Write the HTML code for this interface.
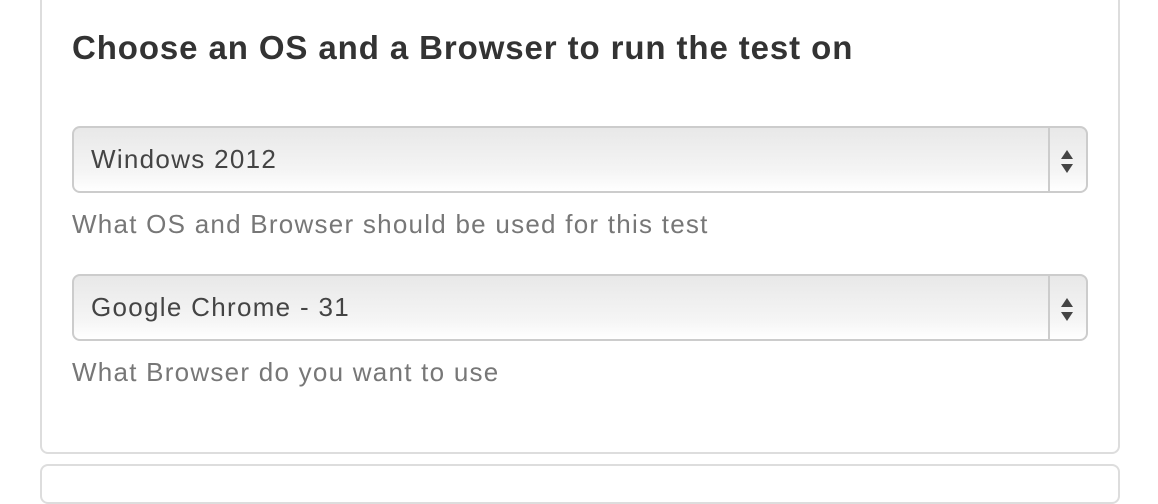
<!DOCTYPE html>
<html><head><style>
body{margin:0;width:1158px;height:468px;overflow:hidden;background:#fff;font-family:"Liberation Sans",Arial,sans-serif;position:relative}
.panel{position:absolute;left:40px;top:-10px;width:1080px;height:464px;border:2px solid #ddd;border-radius:8px;box-sizing:border-box}
.panel2{position:absolute;left:40px;top:464px;width:1080px;height:40px;border:2px solid #ddd;border-radius:8px;box-sizing:border-box}
h1{position:absolute;left:72px;top:29px;margin:0;font-size:33px;letter-spacing:0.9px;font-weight:bold;color:#333}
.sel{position:absolute;left:72px;width:1016px;height:67px;box-sizing:border-box;border:2px solid #ccc;border-radius:8px;background:linear-gradient(#e8e8e8,#f5f5f5 70%,#fff);font-size:26px;letter-spacing:1.3px;color:#444;line-height:63px;padding-left:17px}
.sel .div{position:absolute;right:36px;top:0;bottom:0;border-left:2px solid #ccc}
.sel .up{position:absolute;right:13px;top:22px;width:0;height:0;border-left:6px solid transparent;border-right:6px solid transparent;border-bottom:9px solid #444}
.sel .dn{position:absolute;right:13px;top:36px;width:0;height:0;border-left:6px solid transparent;border-right:6px solid transparent;border-top:9px solid #444}
.help{position:absolute;left:72px;font-size:26px;letter-spacing:1.25px;color:#777}
</style></head><body>
<div class="panel"></div>
<div class="panel2"></div>
<h1>Choose an OS and a Browser to run the test on</h1>
<div class="sel" style="top:126px">Windows 2012<span class="div"></span><span class="up"></span><span class="dn"></span></div>
<div class="help" style="top:209px">What OS and Browser should be used for this test</div>
<div class="sel" style="top:274px">Google Chrome - 31<span class="div"></span><span class="up"></span><span class="dn"></span></div>
<div class="help" style="top:357px">What Browser do you want to use</div>
</body></html>
